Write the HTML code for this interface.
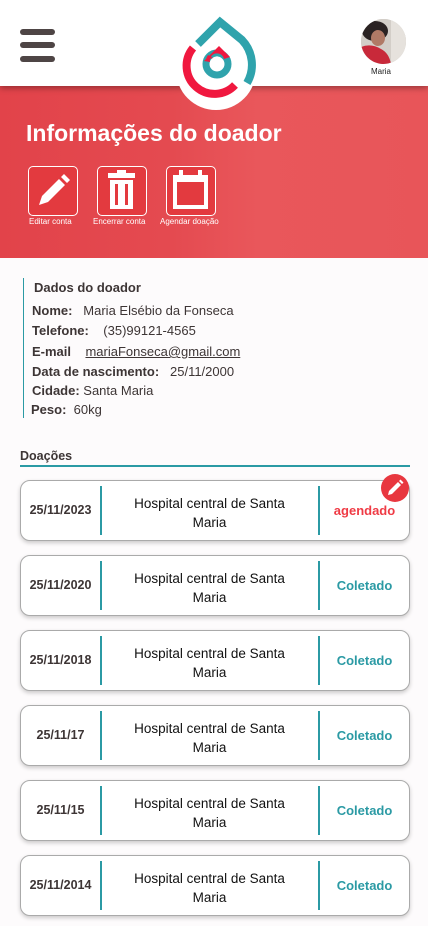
<!DOCTYPE html>
<html><head><meta charset="utf-8"><style>
*{margin:0;padding:0;box-sizing:border-box}
body{width:428px;height:926px;background:#fdfbfc;font-family:"Liberation Sans",sans-serif;position:relative;overflow:hidden;color:#3d3535}
.hdr{position:absolute;left:0;top:0;width:428px;height:86px;background:#fff;box-shadow:0 2px 6px rgba(0,0,0,.35);z-index:2}
.bar{position:absolute;left:20px;width:35px;height:6px;border-radius:3px;background:#4e4545}
.banner{position:absolute;left:0;top:86px;width:428px;height:172px;background:linear-gradient(90deg,#e2434a 0%,#e44a50 40%,#e9575b 60%,#e85559 100%)}
.logo{position:absolute;left:0;top:0;z-index:3}
.av{position:absolute;left:361px;top:19px;width:45px;height:45px;border-radius:50%;overflow:hidden;background:#cfc9c2;z-index:3}
h1{position:absolute;left:26px;top:120px;font-size:23px;color:#fff;font-weight:bold}
.btn{position:absolute;top:166px;width:50px;height:50px;border:1.5px solid #fff;border-radius:5px;background:#e33a3f}
.bl{position:absolute;top:217px;font-size:8px;color:#fff}
.info{position:absolute;left:23px;top:278px;border-left:1.5px solid #2b9aa4;height:140px;padding-left:8px;font-size:13px}
.info div{position:absolute;white-space:nowrap}
b{font-weight:bold}
.dh{position:absolute;left:20px;top:449px;font-size:12.5px;font-weight:bold}
.dl{position:absolute;left:20px;top:465px;width:390px;height:1.5px;background:#2b9aa4}
.card{position:absolute;left:20px;width:390px;height:61px;border:1px solid #aaa;border-radius:10px;background:#fff;box-shadow:0 2px 4px rgba(0,0,0,.2)}
.card .d{position:absolute;left:0;width:79px;top:0;height:59px;line-height:59px;text-align:center;font-weight:bold;font-size:12.5px}
.card .v1,.card .v2{position:absolute;top:5px;height:49px;width:1.5px;background:#2b9aa4}
.v1{left:79px}.v2{left:297px}
.card .h{position:absolute;left:80px;width:217px;top:13px;text-align:center;font-size:13.5px;line-height:19px;color:#111}
.card .s{position:absolute;left:298px;width:91px;top:0;height:59px;line-height:59px;text-align:center;font-weight:bold;font-size:13px;color:#2b9aa4}
</style></head><body>
<div class="hdr"><div class="bar" style="top:29px"></div><div class="bar" style="top:42px"></div><div class="bar" style="top:56px"></div>
<div style="position:absolute;left:371px;top:67px;font-size:8px;color:#222">Maria</div></div>
<div class="av"><svg width="45" height="45" viewBox="0 0 45 45"><rect width="45" height="45" fill="#d3cec8"/><rect x="30" y="0" width="15" height="45" fill="#e6e2dd"/><ellipse cx="14" cy="12" rx="13" ry="10" fill="#2a2222"/><ellipse cx="17" cy="19" rx="7" ry="8" fill="#b07a66"/><path d="M0 45 L0 28 Q10 24 20 30 Q28 34 30 45 Z" fill="#c8293a"/></svg></div>
<div class="banner"></div>
<svg class="logo" width="428" height="120" viewBox="0 0 428 120">
<circle cx="216" cy="70" r="40" fill="#fff"/>
<path d="M198 44 L220 22 L242 40 A36 36 0 0 1 247 83" fill="none" stroke="#2fa3ac" stroke-width="8"/>
<path d="M193 48 A28 28 0 0 0 235 85" fill="none" stroke="#f0183f" stroke-width="8"/>
<circle cx="217" cy="64" r="11" fill="none" stroke="#2fa3ac" stroke-width="7"/>
<path d="M204 61 L219 46 L230 57 L224 59 A7 7 0 0 0 210 62 Z" fill="#f0183f"/>
<path d="M206 60 A11 11 0 0 1 208 55 L213 58 Z" fill="#f0183f"/>
<path d="M217 56 L222 61 A5 5 0 1 1 212 61 Z" fill="#fff"/>
</svg>
<h1>Informações do doador</h1>
<div class="btn" style="left:28px"><svg width="47" height="47" viewBox="0 0 47 47"><path d="M10 38 L13 29 L30 12 L36 18 L19 35 Z M32 10 L35 7 L41 13 L38 16 Z" fill="#fff"/></svg></div>
<div class="btn" style="left:97px"><svg width="47" height="47" viewBox="0 0 47 47"><rect x="10" y="6" width="27" height="5" fill="#fff"/><rect x="19" y="3" width="9" height="4" fill="#fff"/><path d="M12 13 H35 V42 H12 Z M17 17 V38 H20 V17 Z M27 17 V38 H30 V17 Z" fill="#fff" fill-rule="evenodd"/></svg></div>
<div class="btn" style="left:166px"><svg width="47" height="47" viewBox="0 0 47 47"><path d="M6 8 H41 V42 H6 Z M10 15 V38 H37 V15 Z" fill="#fff" fill-rule="evenodd"/><rect x="12" y="3" width="4" height="8" fill="#fff"/><rect x="31" y="3" width="4" height="8" fill="#fff"/></svg></div>
<div class="bl" style="left:29px">Editar conta</div>
<div class="bl" style="left:93px">Encerrar conta</div>
<div class="bl" style="left:160px">Agendar doação</div>
<div class="info">
<div style="left:10px;top:2px"><b>Dados do doador</b></div>
<div style="left:8px;top:25px"><b>Nome:</b>&nbsp;&nbsp; Maria Elsébio da Fonseca</div>
<div style="left:8px;top:45px"><b>Telefone:</b>&nbsp;&nbsp;&nbsp; (35)99121-4565</div>
<div style="left:8px;top:66px"><b>E-mail</b>&nbsp;&nbsp;&nbsp; <u>mariaFonseca@gmail.com</u></div>
<div style="left:8px;top:86px"><b>Data de nascimento:</b>&nbsp;&nbsp; 25/11/2000</div>
<div style="left:8px;top:105px"><b>Cidade:</b> Santa Maria</div>
<div style="left:7px;top:124px"><b>Peso:</b>&nbsp; 60kg</div>
</div>
<div class="dh">Doações</div><div class="dl"></div>
<div class="card" style="top:480px"><div class="d">25/11/2023</div><div class="v1"></div><div class="h">Hospital central de Santa<br>Maria</div><div class="v2"></div><div class="s" style="color:#ef3b45">agendado</div></div>
<div style="position:absolute;left:381px;top:474px;width:28px;height:28px;border-radius:50%;background:#e8373f"><svg width="28" height="28" viewBox="0 0 28 28"><path d="M7 21 L8 17 L17 8 L20 11 L11 20 Z M18 7 L19.5 5.5 L22.5 8.5 L21 10 Z" fill="#fff"/></svg></div>
<div class="card" style="top:555px"><div class="d">25/11/2020</div><div class="v1"></div><div class="h">Hospital central de Santa<br>Maria</div><div class="v2"></div><div class="s">Coletado</div></div>
<div class="card" style="top:630px"><div class="d">25/11/2018</div><div class="v1"></div><div class="h">Hospital central de Santa<br>Maria</div><div class="v2"></div><div class="s">Coletado</div></div>
<div class="card" style="top:705px"><div class="d">25/11/17</div><div class="v1"></div><div class="h">Hospital central de Santa<br>Maria</div><div class="v2"></div><div class="s">Coletado</div></div>
<div class="card" style="top:780px"><div class="d">25/11/15</div><div class="v1"></div><div class="h">Hospital central de Santa<br>Maria</div><div class="v2"></div><div class="s">Coletado</div></div>
<div class="card" style="top:855px"><div class="d">25/11/2014</div><div class="v1"></div><div class="h">Hospital central de Santa<br>Maria</div><div class="v2"></div><div class="s">Coletado</div></div>
</body></html>
